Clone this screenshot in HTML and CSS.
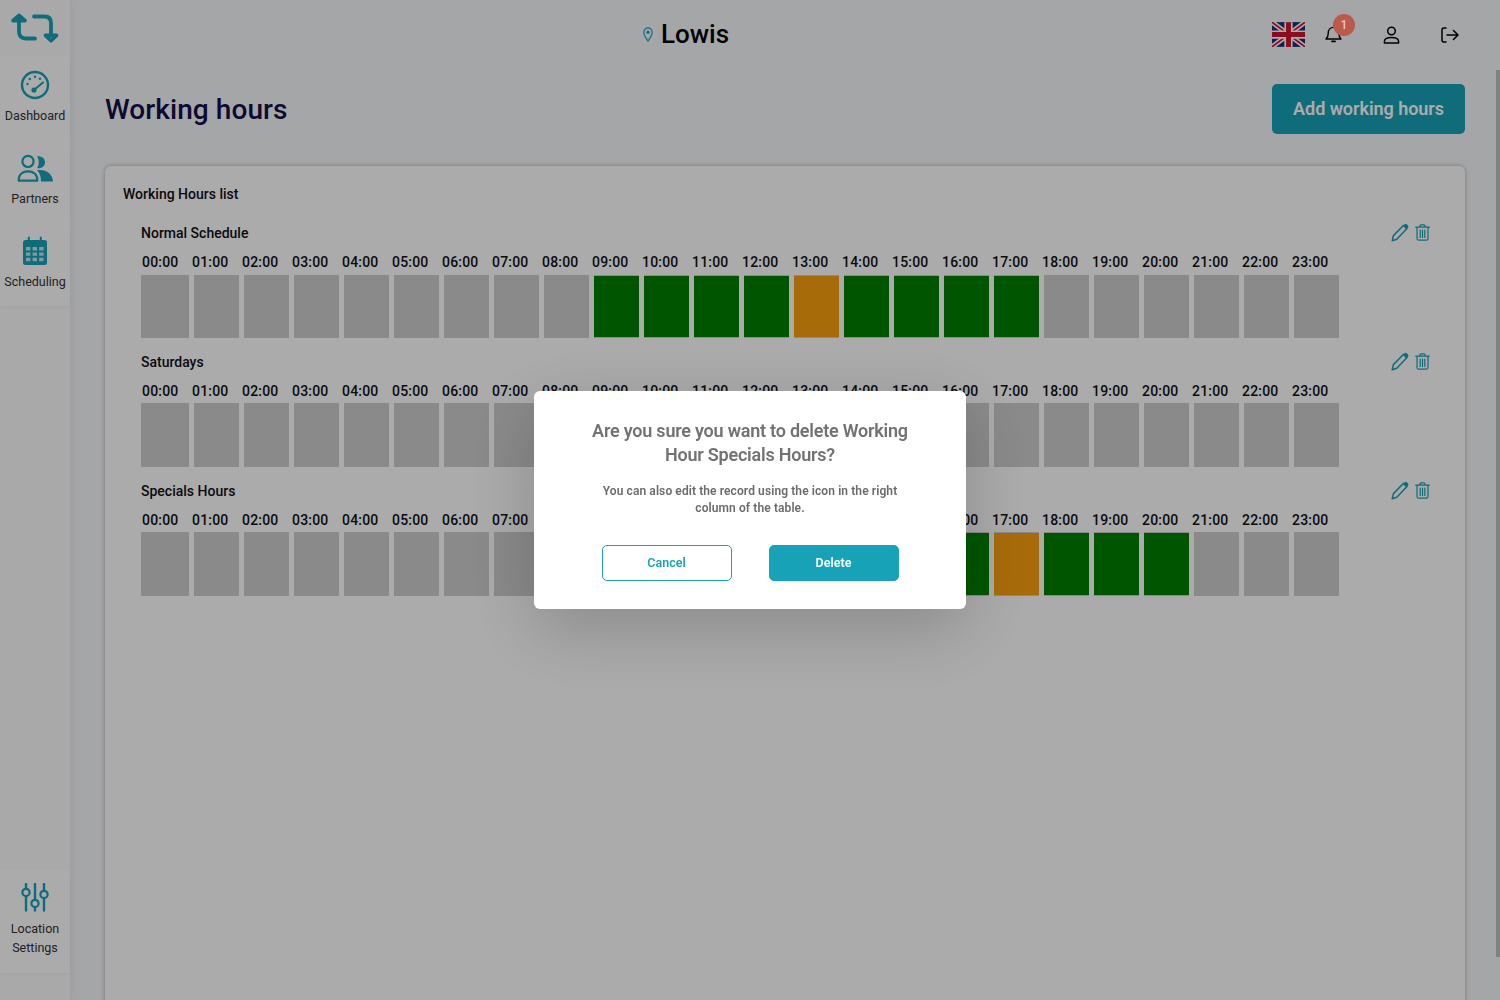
FILE: index.html
```html
<!DOCTYPE html>
<html lang="en">
<head>
<meta charset="utf-8">
<title>Working hours</title>
<link rel="stylesheet" href="styles.css">
</head>
<body>
<svg class="defs" width="0" height="0" aria-hidden="true">
  <symbol id="pencil" viewBox="0 0 18 19">
    <path d="M1.2 17.8 L2.4 12.6 L12.6 2.2 L16 5.6 L5.8 16.2 Z" fill="none" stroke="currentColor" stroke-width="1.5" stroke-linejoin="round"/>
    <path d="M12 3 L13.8 1.2 Q14.8 .4 15.8 1.2 L17 2.4 Q17.8 3.4 17 4.4 L15.2 6.2 Z" fill="currentColor"/>
  </symbol>
  <symbol id="trash" viewBox="0 0 15 17">
    <path d="M.6 3.2 H14.4 M5 3 V1.8 Q5 .8 6 .8 H9 Q10 .8 10 1.8 V3 M2 3.4 V14.4 Q2 16.2 3.8 16.2 H11.2 Q13 16.2 13 14.4 V3.4 M5.2 6 V13.4 M7.5 6 V13.4 M9.8 6 V13.4" fill="none" stroke="currentColor" stroke-width="1.2" stroke-linecap="round"/>
  </symbol>
</svg>

<div class="app">
  <aside class="sidebar">
    <div class="sidebar-top">
      <div class="logo">
        <svg width="70" height="57" viewBox="0 0 70 57" class="teal">
          <path d="M19 19 V31.5 Q19 38.5 26 38.5 H35" fill="none" stroke="currentColor" stroke-width="3.8" stroke-linecap="round"/>
          <path d="M13 20.6 L19 15.4 L25 20.6 Z" fill="none" stroke="currentColor" stroke-width="3.8" stroke-linejoin="round"/>
          <path d="M34 16.5 H44.5 Q51 16.5 51 23 V34" fill="none" stroke="currentColor" stroke-width="3.8" stroke-linecap="round"/>
          <path d="M45.5 35.4 H56.5 L51 40.6 Z" fill="none" stroke="currentColor" stroke-width="3.8" stroke-linejoin="round"/>
        </svg>
      </div>
      <a class="nav-item">
        <svg width="30" height="30" viewBox="0 0 30 30" class="teal">
          <circle cx="15" cy="15" r="13" fill="none" stroke="currentColor" stroke-width="2.4"/>
          <circle cx="7.5" cy="14" r="1.2" fill="currentColor"/><circle cx="9.8" cy="9" r="1.2" fill="currentColor"/>
          <circle cx="15" cy="6.8" r="1.2" fill="currentColor"/><circle cx="20" cy="8.8" r="1.2" fill="currentColor"/>
          <circle cx="14" cy="20" r="2.6" fill="currentColor"/>
          <path d="M14.5 19.5 L23 12.5" stroke="currentColor" stroke-width="2" stroke-linecap="round"/>
        </svg>
        <span>Dashboard</span>
      </a>
      <a class="nav-item">
        <svg width="38" height="30" viewBox="-1 0 38 30" class="teal">
          <circle cx="11" cy="8.4" r="5.6" fill="none" stroke="currentColor" stroke-width="2.2"/>
          <path d="M1.6 27.6 C1.6 21 6 18.4 11 18.4 C16 18.4 20.4 21 20.4 27.6 Z" fill="none" stroke="currentColor" stroke-width="2.2" stroke-linejoin="round"/>
          <path d="M20 3.4 C24 2.8 28 5 28 9.4 C28 13.4 24 15.8 20 15.2 C22.4 12 22.4 6.8 20 3.4 Z" fill="currentColor"/>
          <path d="M20 17.2 C28 15.6 35.6 20 36 28.6 H24 C24 24 23 20 20 17.2 Z" fill="currentColor"/>
        </svg>
        <span>Partners</span>
      </a>
      <a class="nav-item">
        <svg width="26" height="30" viewBox="0 0 26 30" class="teal">
          <rect x="1" y="4" width="24" height="25" rx="2.5" fill="currentColor"/>
          <path d="M6.8 1.5 V6 M18.8 1.5 V6" stroke="currentColor" stroke-width="2" stroke-linecap="round"/>
          <path d="M4 11 h4.4 v3.4 h-4.4z M10.6 11 h4.4 v3.4 h-4.4z M17.2 11 h4.4 v3.4 h-4.4z M4 16.4 h4.4 v3.4 h-4.4z M10.6 16.4 h4.4 v3.4 h-4.4z M17.2 16.4 h4.4 v3.4 h-4.4z M4 21.8 h4.4 v3.4 h-4.4z M10.6 21.8 h4.4 v3.4 h-4.4z M17.2 21.8 h4.4 v3.4 h-4.4z" fill="#fff" fill-opacity=".75"/>
        </svg>
        <span>Scheduling</span>
      </a>
    </div>
    <a class="nav-item nav-item-bottom">
      <svg width="30" height="30" viewBox="0 0 30 30" class="teal">
        <path d="M6 1 V5.4 M6 13.4 V27.5 M15 1 V16.4 M15 24.4 V27.5 M24 1 V7.4 M24 15.4 V27.5" stroke="currentColor" stroke-width="2.4" stroke-linecap="round"/>
        <circle cx="6" cy="9.4" r="3.6" fill="none" stroke="currentColor" stroke-width="2.2"/>
        <circle cx="15" cy="20.4" r="3.6" fill="none" stroke="currentColor" stroke-width="2.2"/>
        <circle cx="24" cy="11.4" r="3.6" fill="none" stroke="currentColor" stroke-width="2.2"/>
      </svg>
      <span>Location<br>Settings</span>
    </a>
  </aside>

  <main class="main">
    <header class="topbar">
      <div class="brand">
        <svg width="10" height="15" viewBox="0 0 10 15" class="teal">
          <path d="M5 14 C3 11 .8 8.4 .8 5.2 C.8 2.8 2.8 .8 5 .8 C7.2 .8 9.2 2.8 9.2 5.2 C9.2 8.4 7 11 5 14 Z" fill="none" stroke="currentColor" stroke-width="1.2"/>
          <circle cx="5" cy="5.2" r="1.6" fill="currentColor"/>
        </svg>
        <span class="brand-name">Lowis</span>
      </div>
      <div class="top-actions">
        <svg class="flag" width="33" height="25" viewBox="0 0 60 45">
          <rect width="60" height="45" fill="#1c2f78"/>
          <path d="M0 0 L60 45 M60 0 L0 45" stroke="#fff" stroke-width="9"/>
          <path d="M0 0 L60 45 M60 0 L0 45" stroke="#d0142c" stroke-width="3"/>
          <path d="M30 0 V45 M0 22.5 H60" stroke="#fff" stroke-width="15"/>
          <path d="M30 0 V45 M0 22.5 H60" stroke="#d0142c" stroke-width="9"/>
        </svg>
        <div class="bell">
          <svg width="17" height="18" viewBox="0 0 17 18" fill="none" stroke="#000" stroke-width="1.4" stroke-linejoin="round">
            <path d="M1 14 C2.6 12.6 3.2 11 3.2 8.4 C3.2 4.8 5.4 2.4 8.5 2.4 C11.6 2.4 13.8 4.8 13.8 8.4 C13.8 11 14.4 12.6 16 14 Z"/>
            <path d="M7 16.4 H10" stroke-width="1.8" stroke-linecap="round"/>
          </svg>
          <span class="badge">1</span>
        </div>
        <svg class="top-icon" width="17" height="18" viewBox="0 0 17 18" fill="none" stroke="#000" stroke-width="1.5">
          <circle cx="8.5" cy="5" r="3.8"/>
          <path d="M1.4 17 V15.4 C1.4 12.6 4 11.4 8.5 11.4 C13 11.4 15.6 12.6 15.6 15.4 V17 Z" stroke-linejoin="round"/>
        </svg>
        <svg class="top-icon" width="18" height="16" viewBox="0 0 18 16" fill="none" stroke="#000" stroke-width="1.5" stroke-linecap="round" stroke-linejoin="round">
          <path d="M5 1 H3 Q1 1 1 3 V13 Q1 15 3 15 H5"/>
          <path d="M6 8 H17 M12.5 3.5 L17 8 L12.5 12.5"/>
        </svg>
      </div>
    </header>

    <div class="title-row">
      <h1 class="page-title">Working hours</h1>
      <button class="btn-add">Add working hours</button>
    </div>

    <section class="card">
      <h2 class="card-title">Working Hours list</h2>

      <div class="schedule schedule-first">
        <div class="schedule-head">
          <span class="schedule-name">Normal Schedule</span>
          <div class="row-actions">
            <svg class="icon-pencil" width="18" height="19"><use href="#pencil"/></svg>
            <svg class="icon-trash" width="15" height="17"><use href="#trash"/></svg>
          </div>
        </div>
        <div class="hours"><span>00:00</span><span>01:00</span><span>02:00</span><span>03:00</span><span>04:00</span><span>05:00</span><span>06:00</span><span>07:00</span><span>08:00</span><span>09:00</span><span>10:00</span><span>11:00</span><span>12:00</span><span>13:00</span><span>14:00</span><span>15:00</span><span>16:00</span><span>17:00</span><span>18:00</span><span>19:00</span><span>20:00</span><span>21:00</span><span>22:00</span><span>23:00</span></div>
        <div class="cells">
          <i></i><i></i><i></i><i></i><i></i><i></i><i></i><i></i><i></i>
          <i class="on"></i><i class="on"></i><i class="on"></i><i class="on"></i><i class="brk"></i><i class="on"></i><i class="on"></i><i class="on"></i><i class="on"></i>
          <i></i><i></i><i></i><i></i><i></i><i></i>
        </div>
      </div>

      <div class="schedule">
        <div class="schedule-head">
          <span class="schedule-name">Saturdays</span>
          <div class="row-actions">
            <svg class="icon-pencil" width="18" height="19"><use href="#pencil"/></svg>
            <svg class="icon-trash" width="15" height="17"><use href="#trash"/></svg>
          </div>
        </div>
        <div class="hours"><span>00:00</span><span>01:00</span><span>02:00</span><span>03:00</span><span>04:00</span><span>05:00</span><span>06:00</span><span>07:00</span><span>08:00</span><span>09:00</span><span>10:00</span><span>11:00</span><span>12:00</span><span>13:00</span><span>14:00</span><span>15:00</span><span>16:00</span><span>17:00</span><span>18:00</span><span>19:00</span><span>20:00</span><span>21:00</span><span>22:00</span><span>23:00</span></div>
        <div class="cells">
          <i></i><i></i><i></i><i></i><i></i><i></i><i></i><i></i><i></i><i></i><i></i><i></i>
          <i></i><i></i><i></i><i></i><i></i><i></i><i></i><i></i><i></i><i></i><i></i><i></i>
        </div>
      </div>

      <div class="schedule">
        <div class="schedule-head">
          <span class="schedule-name">Specials Hours</span>
          <div class="row-actions">
            <svg class="icon-pencil" width="18" height="19"><use href="#pencil"/></svg>
            <svg class="icon-trash" width="15" height="17"><use href="#trash"/></svg>
          </div>
        </div>
        <div class="hours"><span>00:00</span><span>01:00</span><span>02:00</span><span>03:00</span><span>04:00</span><span>05:00</span><span>06:00</span><span>07:00</span><span>08:00</span><span>09:00</span><span>10:00</span><span>11:00</span><span>12:00</span><span>13:00</span><span>14:00</span><span>15:00</span><span>16:00</span><span>17:00</span><span>18:00</span><span>19:00</span><span>20:00</span><span>21:00</span><span>22:00</span><span>23:00</span></div>
        <div class="cells">
          <i></i><i></i><i></i><i></i><i></i><i></i><i></i><i></i><i></i><i></i><i></i><i></i>
          <i></i><i></i><i></i><i></i><i class="on"></i><i class="brk"></i><i class="on"></i><i class="on"></i><i class="on"></i><i></i><i></i><i></i>
        </div>
      </div>
    </section>
  </main>
</div>

<div class="scroll-thumb"></div>

<div class="backdrop">
  <div class="modal" role="dialog">
    <h3 class="modal-title">Are you sure you want to delete Working Hour Specials Hours?</h3>
    <p class="modal-text">You can also edit the record using the icon in the right column of the table.</p>
    <div class="modal-actions">
      <button class="btn btn-outline">Cancel</button>
      <button class="btn btn-solid">Delete</button>
    </div>
  </div>
</div>
</body>
</html>
```
FILE: styles.css
```css
* { box-sizing: border-box; }
html, body { height: 100%; }
body {
  margin: 0;
  overflow: hidden;
  background: #f7f8fb;
  color: #111;
  font-family: Roboto, "Liberation Sans", sans-serif;
}
.defs { position: absolute; }
.teal { color: #17a2b8; display: block; }

.app { display: flex; height: 100vh; overflow: hidden; }

/* Sidebar */
.sidebar {
  flex: 0 0 70px;
  display: flex;
  flex-direction: column;
  justify-content: space-between;
  padding-bottom: 27px;
  background: #fdfdfd;
  box-shadow: 2px 0 10px rgba(0, 0, 0, .06);
}
.logo { height: 57px; }
.nav-item {
  height: 83px;
  display: flex;
  flex-direction: column;
  align-items: center;
  padding-top: 13px;
  background: #fff;
  font-size: 12.5px;
  line-height: 19px;
  color: #333;
  text-align: center;
  box-shadow: 0 2px 3px rgba(0, 0, 0, .03);
}
.nav-item svg { margin-bottom: 6px; }
.nav-item-bottom { height: 103px; }

/* Main */
.main { flex: 1; min-width: 0; padding: 0 35px; }
.topbar { display: flex; justify-content: space-between; align-items: center; height: 68px; }
.brand { display: flex; align-items: center; gap: 8px; margin-left: 538px; }
.brand-name { font-size: 26px; font-weight: 500; color: #000; }
.top-actions { display: flex; align-items: center; gap: 41px; padding-right: 6px; }
.flag { display: block; margin-right: -21px; }
.top-icon { display: block; margin-top: 2px; }
.bell { position: relative; height: 18px; }
.bell svg { display: block; }
.badge {
  position: absolute;
  z-index: 20;
  left: 8px;
  top: -11px;
  width: 22px;
  height: 22px;
  border-radius: 50%;
  background: #bb5a4c;
  color: #e8cbc4;
  font-size: 12px;
  font-weight: 500;
  line-height: 22px;
  text-align: center;
}

.title-row { display: flex; justify-content: space-between; align-items: center; margin-top: 16px; height: 50px; }
.page-title { margin: 0; font-size: 28px; font-weight: 500; letter-spacing: .08px; color: #14104b; }
.btn-add {
  width: 193px;
  height: 50px;
  padding-bottom: 3px;
  border: 0;
  border-radius: 5px;
  background: #17a2b8;
  color: #fff;
  font: 600 18px Roboto, sans-serif;
  letter-spacing: -.05px;
}

.card {
  margin-top: 32px;
  min-height: 900px;
  padding: 18px 17px 18px 18px;
  background: #fff;
  border-radius: 6px;
  box-shadow: 0 0 4px rgba(0, 0, 0, .3);
}
.card-title { margin: 0 0 19px; font-size: 14px; font-weight: 500; line-height: 20px; }

.schedule { margin: 0 0 14px 18px; }
.schedule-head { display: flex; justify-content: space-between; align-items: center; height: 20px; padding-right: 18px; margin-bottom: 9px; }
.schedule-name { font-size: 14px; font-weight: 500; line-height: 20px; }
.row-actions { display: flex; align-items: center; gap: 6px; margin-bottom: 2px; color: #17a2b8; }
.row-actions svg { display: block; }

.hours { display: flex; height: 20px; padding-left: 1px; font-size: 14px; font-weight: 500; letter-spacing: .2px; line-height: 20px; }
.hours span { flex: 0 0 50px; }

.cells { display: flex; gap: 5px; margin-top: 2px; height: 64px; }
.schedule-first .cells { margin-top: 3px; height: 63px; }
.cells i {
  flex: 0 0 45px;
  background: #cecece;
  border: solid #cecece;
  border-width: 1px 0;
}
.cells i:first-child { flex-basis: 48px; }
.cells i.on { background: #008000; }
.cells i.brk { background: #faa010; }

.scroll-thumb {
  position: fixed;
  right: 0;
  top: 70px;
  width: 4px;
  height: 887px;
  background: #c1c1c1;
}

/* Confirm dialog */
.backdrop {
  position: fixed;
  inset: 0;
  z-index: 10;
  display: flex;
  align-items: center;
  justify-content: center;
  background: rgba(0, 0, 0, .33);
}
.modal {
  width: 432px;
  height: 218px;
  padding: 28px 40px;
  background: #fff;
  border-radius: 6px;
  text-align: center;
  box-shadow: 0 20px 70px rgba(0, 0, 0, .2);
}
.modal-title { margin: 0 0 16px; font-size: 18px; font-weight: 600; letter-spacing: -.22px; line-height: 24px; color: #727272; }
.modal-text { margin: 0 16px 28px; font-size: 12px; font-weight: 600; letter-spacing: .1px; line-height: 17px; color: #6b6b6b; }
.modal-actions { display: flex; justify-content: center; gap: 37px; }
.btn {
  width: 130px;
  height: 36px;
  padding-bottom: 3px;
  border-radius: 5px;
  border: 1px solid #17a2b8;
  font: 600 12.5px Roboto, sans-serif;
}
.btn-outline { background: #fff; color: #17a2b8; }
.btn-solid { background: #17a2b8; color: #fff; }
```
